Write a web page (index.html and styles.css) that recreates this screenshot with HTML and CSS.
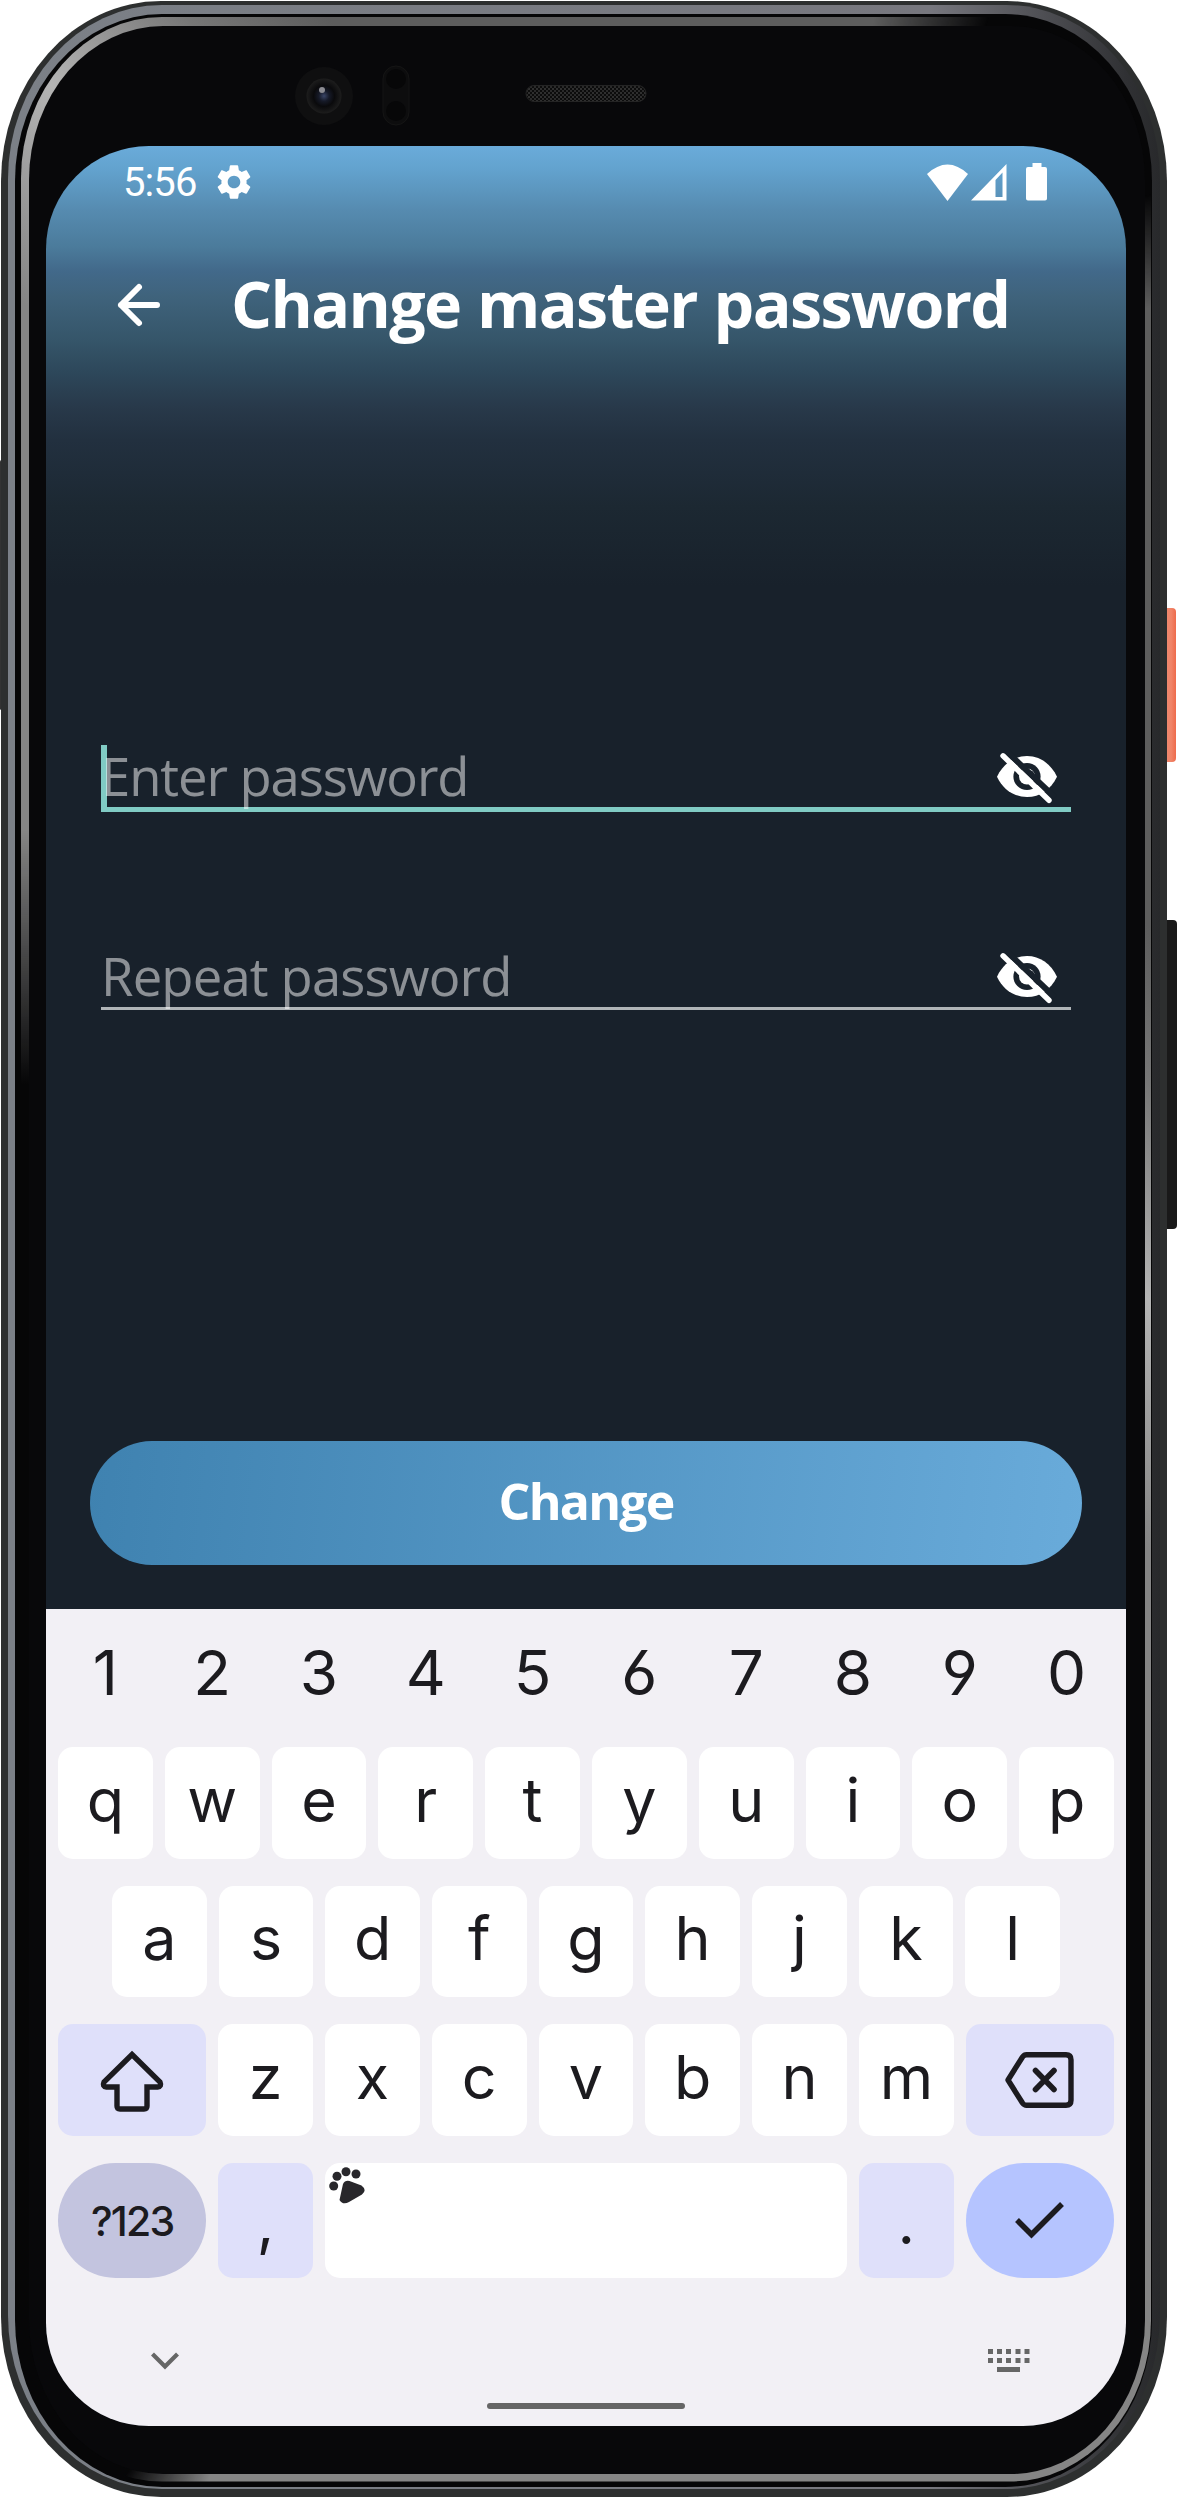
FILE: index.html
```html
<!DOCTYPE html>
<html lang="en">
<head>
<meta charset="utf-8">
<title>Change master password</title>
<link rel="stylesheet" href="styles.css">
</head>
<body>
<div class="device">
  <svg class="hardware" viewBox="0 0 1178 2498" width="1178" height="2498" aria-hidden="true">
    <defs>
      <linearGradient id="rim" x1="0" x2="1"><stop offset="0" stop-color="#7b8087"/><stop offset=".8" stop-color="#77777e"/><stop offset=".97" stop-color="#303134"/><stop offset="1" stop-color="#28292b"/></linearGradient>
      <linearGradient id="glass" gradientUnits="userSpaceOnUse" x1="20" y1="300" x2="330" y2="20"><stop offset="0" stop-color="#858585"/><stop offset=".4" stop-color="#b4b4b4"/><stop offset=".75" stop-color="#777"/><stop offset="1" stop-color="#5d5d5d"/></linearGradient>
      <linearGradient id="orange" x1="0" x2="1"><stop offset="0" stop-color="#d8583f"/><stop offset=".25" stop-color="#f08a70"/><stop offset=".7" stop-color="#f08468"/><stop offset="1" stop-color="#ee6b4c"/></linearGradient>
      <radialGradient id="lens"><stop offset="0" stop-color="#3a4566"/><stop offset=".3" stop-color="#161a28"/><stop offset=".6" stop-color="#0a0a0c"/><stop offset="1" stop-color="#1d1d1d"/></radialGradient>
      <radialGradient id="shade"><stop offset="0" stop-color="#000"/><stop offset=".55" stop-color="#000"/><stop offset="1" stop-color="#000" stop-opacity="0"/></radialGradient>
      <linearGradient id="fade" x1="0" y1="0" x2="0" y2="1"><stop offset="0" stop-color="#000" stop-opacity="0"/><stop offset=".16" stop-color="#000"/><stop offset="1" stop-color="#000"/></linearGradient>
      <mask id="shine" maskUnits="userSpaceOnUse" x="0" y="0" width="1178" height="2498">
        <rect width="1178" height="2498" fill="#fff"/>
        <circle cx="1120" cy="60" r="250" fill="url(#shade)"/>
        <rect x="0" y="830" width="40" height="1600" fill="url(#fade)"/>
        <circle cx="50" cy="2420" r="170" fill="url(#shade)"/>
      </mask>
      <pattern id="mesh" width="4" height="4" patternUnits="userSpaceOnUse"><rect width="4" height="4" fill="#0c0c0c"/><circle cx="1" cy="1" r="1" fill="#3a3a3a"/><circle cx="3" cy="3" r="1" fill="#333"/></pattern>
    </defs>
    <rect x="1160" y="608" width="16" height="154" rx="4" fill="url(#orange)"/>
    <rect x="1160" y="920" width="17" height="309" rx="4" fill="#191919"/>
    <rect x="0" y="460" width="3" height="250" rx="1.5" fill="#333"/>
    <rect x="1" y="1" width="1166" height="2496" rx="160" ry="180" fill="#2d2f2f"/>
    <rect x="8" y="5" width="1152" height="2484" rx="154" ry="174" fill="url(#rim)"/>
    <rect x="15" y="14" width="1137" height="2473" rx="147" ry="167" fill="#060607"/>
    <rect x="21" y="17" width="1130" height="2464.500" rx="141" ry="161" fill="url(#glass)" mask="url(#shine)"/>
    <rect x="29" y="26" width="1116" height="2448" rx="134" ry="154" fill="#08080a"/>
    <circle cx="324" cy="96" r="29" fill="#0f0f10"/>
    <circle cx="324" cy="96" r="17.500" fill="url(#lens)"/>
    <circle cx="322" cy="90" r="3" fill="#8c8c92"/>
    <rect x="383" y="66" width="26" height="59" rx="13" fill="#0d0d0e" stroke="#151515"/>
    <circle cx="396" cy="79" r="10" fill="#070708"/><circle cx="396" cy="111" r="10" fill="#070708"/>
    <rect x="526" y="85.500" width="120" height="16" rx="8" fill="url(#mesh)" stroke="#242424"/>
  </svg>

  <main class="screen">
    <div class="status">
      <span class="time">5:56</span>
      <svg class="gear" viewBox="0 0 24 24"><path d="M19.140 12.940c.040-.300.060-.610.060-.940 0-.320-.020-.640-.070-.940l2.030-1.580c.180-.140.230-.410.120-.610l-1.920-3.320c-.120-.220-.370-.290-.590-.220l-2.390.960c-.500-.380-1.030-.700-1.620-.940l-.360-2.540c-.040-.240-.240-.410-.480-.410h-3.840c-.240 0-.430.170-.470.410l-.360 2.540c-.590.240-1.130.570-1.620.940l-2.390-.960c-.220-.080-.470 0-.590.220L2.740 8.870c-.120.210-.080.470.120.610l2.030 1.580c-.050.300-.090.630-.090.940s.020.640.070.940l-2.030 1.580c-.180.140-.230.410-.120.610l1.920 3.320c.120.220.370.290.590.220l2.390-.960c.500.380 1.030.700 1.620.940l.360 2.540c.050.240.240.410.480.410h3.840c.240 0 .440-.170.470-.410l.360-2.540c.590-.240 1.130-.560 1.620-.940l2.390.960c.220.080.470 0 .590-.220l1.920-3.320c.120-.220.070-.470-.120-.610zM12 15.600c-1.980 0-3.600-1.620-3.600-3.600s1.620-3.600 3.600-3.600 3.600 1.620 3.600 3.600-1.620 3.600-3.600 3.600z"/></svg>
      <svg class="signals" viewBox="0 0 122 38">
        <path d="M0 11Q20.500-8 41 11L20.500 38Z"/>
        <path fill-rule="evenodd" d="M44 37.500L79.500 1V37.500ZM68.500 17V34H75.500V9.500Z"/>
        <path d="M105.500 0h9v4h3.500q2 0 2 2v29.500q0 2-2 2h-17q-2 0-2-2V6q0-2 2-2h4.500Z"/>
      </svg>
    </div>

    <header class="header">
      <svg class="back" viewBox="0 0 46 46"><path d="M41 23H5M23 5L5 23l18 18" fill="none" stroke="#fff" stroke-width="6" stroke-linecap="round" stroke-linejoin="round"/></svg>
      <h1>Change master password</h1>
    </header>

    <section class="form">
      <div class="field focused">
        <span class="hint first">Enter password</span>
        <svg class="eye" viewBox="10 10 64 54"><use href="#eye-off"/></svg>
      </div>
      <div class="field">
        <span class="hint">Repeat password</span>
        <svg class="eye" viewBox="10 10 64 54">
          <g id="eye-off">
            <path fill="#fff" d="M12 36.700C18 24 29 16 42 16s24 8 30 20.700C66 49.500 55 57 42 57S18 49.500 12 36.700Z"/>
            <circle cx="42" cy="36.500" r="13.600" fill="#18212b"/>
            <circle cx="42" cy="36.500" r="8" fill="#fff"/>
            <path d="M43 33q5-4 6 3" fill="none" stroke="#18212b" stroke-width="1.500"/>
            <path d="M20 10L70 57.500" stroke="#18212b" stroke-width="6"/>
            <path d="M18 15.800L64 60.300" stroke="#fff" stroke-width="5.400" stroke-linecap="round"/>
          </g>
        </svg>
      </div>
      <div class="submit">Change</div>
    </section>

    <section class="keyboard">
      <div class="row digits"><span>1</span><span>2</span><span>3</span><span>4</span><span>5</span><span>6</span><span>7</span><span>8</span><span>9</span><span>0</span></div>
      <div class="row letters"><span class="key">q</span><span class="key">w</span><span class="key">e</span><span class="key">r</span><span class="key">t</span><span class="key">y</span><span class="key">u</span><span class="key">i</span><span class="key">o</span><span class="key">p</span></div>
      <div class="row letters inset"><span class="key">a</span><span class="key">s</span><span class="key">d</span><span class="key">f</span><span class="key">g</span><span class="key">h</span><span class="key">j</span><span class="key">k</span><span class="key">l</span></div>
      <div class="row letters">
        <span class="key wide tint"><svg width="64" height="64" viewBox="0 0 64 64"><path d="M32 6.500L60 34q2 4.500-2.500 5H47v19q0 3-3 3H20q-3 0-3-3V39H6.500q-4.500-.500-2.500-5Z" fill="none" stroke="#1c1b1f" stroke-width="5.400"/></svg></span>
        <span class="key">z</span><span class="key">x</span><span class="key">c</span><span class="key">v</span><span class="key">b</span><span class="key">n</span><span class="key">m</span>
        <span class="key wide tint"><svg width="72" height="60" viewBox="0 0 72 60"><path d="M4 30L18.500 7q1.700-2.300 4-2.300H62q5 0 5 5v40.600q0 5-5 5H22.500q-2.300 0-4-2.300Z" fill="none" stroke="#1c1b1f" stroke-width="5.400" stroke-linejoin="round"/><path d="M31.500 20.500l18.500 19m0-19l-18.500 19" stroke="#1c1b1f" stroke-width="5.600" stroke-linecap="round"/></svg></span>
      </div>
      <div class="row bottom">
        <span class="key wide symbols">?123</span>
        <span class="key tint punct">,</span>
        <span class="key space"><svg class="paw" width="36" height="37" viewBox="0 0 36 37"><circle cx="4.700" cy="19" r="4.500"/><circle cx="8" cy="9.200" r="4.500"/><circle cx="17" cy="4.800" r="4.500"/><circle cx="27" cy="7" r="4.500"/><path d="M14 17q2-4 6.500-3l12 4.500q6 4.500.500 9L20 35q-6 3.500-9.500-2Z"/></svg></span>
        <span class="key tint punct">.</span>
        <span class="key wide enter"><svg width="50" height="40" viewBox="0 0 50 40"><path d="M2 20l14.500 14.500L47 4" fill="none" stroke="#1c1b1f" stroke-width="5.500"/></svg></span>
      </div>
      <div class="tools">
        <svg width="28" height="18" viewBox="0 0 28 18"><path d="M1.500 2L14 14.500 26.500 2" fill="none" stroke="#666" stroke-width="4.200"/></svg>
        <svg width="42" height="24" viewBox="0 0 42 24" fill="#666"><path d="M0 0h5v5H0zM9 0h5v5H9zM18 0h5v5h-5zM27.500 0h5v5h-5zM36.500 0h5v5h-5zM0 9h5v5H0zM9 9h5v5H9zM18 9h5v5h-5zM27.500 9h5v5h-5zM36.500 9h5v5h-5zM9 18h23v5H9z"/></svg>
      </div>
      <div class="home"></div>
    </section>
  </main>
</div>
</body>
</html>
```
FILE: styles.css
```css
* { box-sizing: border-box; }
body { margin: 0; background: #fff; }
.device { position: relative; width: 1178px; height: 2498px; padding: 146px 52px 72px 46px; overflow: hidden; }
.hardware { position: absolute; inset: 0; }
.screen {
  position: relative; display: flex; flex-direction: column;
  width: 1080px; height: 2280px; border-radius: 103px; overflow: hidden;
  font-family: "Open Sans", "Noto Sans", sans-serif; color: #fff;
  background: #18212b linear-gradient(180deg, #6aabda 0, #63a3cf 22px, #568bb0 64px, #4b7b9b 101px, #42698a 125px, #3f637c 150px, #355569 195px, #2d475a 227px, #28394a 261px, #22303f 294px, #1f2c39 327px, #1c2832 361px, #18212b 440px);
}
.status { display: flex; align-items: center; height: 72px; padding: 0 77px 0 77px; }
.time { font: 400 40px/48px Roboto, sans-serif; letter-spacing: -.9px; padding-top: 2px; }
.gear { width: 42px; height: 42px; margin-left: 16px; fill: #fff; }
.signals { width: 122px; height: 38px; margin-left: auto; fill: #fff; }
.header { display: flex; align-items: center; height: 169px; padding-left: 70px; }
.back { width: 46px; height: 46px; margin-top: 5px; }
h1 { margin: 0 0 0 69px; font-size: 64.500px; line-height: 88px; font-weight: 700; letter-spacing: -1.650px; word-spacing: 1.500px; white-space: nowrap; }
.form { display: flex; flex-direction: column; padding: 358px 44px 44px; height: 1222px; }
.field { position: relative; display: flex; align-items: center; justify-content: space-between; height: 67px; margin: 0 11px 131px; padding: 2px 12px 0 0; border-bottom: 3px solid #b0b5b8; }
.focused { padding-top: 0; border-bottom: 5px solid #80cbc4; }
.focused::before { content: ""; position: absolute; left: 0; top: 0; width: 6px; height: 64px; background: #80cbc4; }
.hint { position: relative; font-size: 52.600px; line-height: 62px; letter-spacing: -.820px; color: rgba(255,255,255,.5); white-space: nowrap; }
.first { letter-spacing: -1.080px; }
.eye { width: 64px; height: 54px; margin-top: 2px; }
.submit { margin-top: auto; height: 124px; border-radius: 62px; background: linear-gradient(96deg, #3f82b0, #69abda); font-size: 50px; font-weight: 700; line-height: 121px; letter-spacing: -1.800px; text-align: center; }
.keyboard { display: flex; flex-direction: column; height: 817px; padding: 18px 12px 0; background: #f2f0f5; color: #1c1b1f; font: 400 61px/1 Inter, sans-serif; font-feature-settings: "cv03", "cv04"; }
.row { display: grid; grid-template-columns: repeat(20, minmax(0, 1fr)); column-gap: 12px; height: 111.670px; margin-bottom: 27px; }
.row > * { grid-column: span 2; display: flex; align-items: center; justify-content: center; min-width: 0; }
.row.digits { height: 93px; font-size: 62px; padding-bottom: 1px; }
.key { background: #fff; border-radius: 15px; padding-bottom: 5px; }
.inset { padding: 0 54px; grid-template-columns: repeat(18, minmax(0, 1fr)); }
.row .wide { grid-column: span 3; padding: 0; }
.tint { background: #dfe0fa; }
.row.bottom { height: 115px; }
.row .symbols { background: #c3c4df; border-radius: 58px; padding-top: 3px; font-size: 41px; font-weight: 500; letter-spacing: -1.800px; }
.row .punct { padding: 5px 0 0; }
.row .space { grid-column: span 10; align-items: flex-start; justify-content: flex-start; padding: 4px; }
.paw { fill: #28272b; }
.row .enter { background: #b5c4ff; border-radius: 58px; }
.tools { display: flex; align-items: center; justify-content: space-between; height: 66px; margin: 23px 84px 0 93px; }
.home { width: 198px; height: 6px; margin: 9px auto 0; border-radius: 3px; background: #666; }
```
